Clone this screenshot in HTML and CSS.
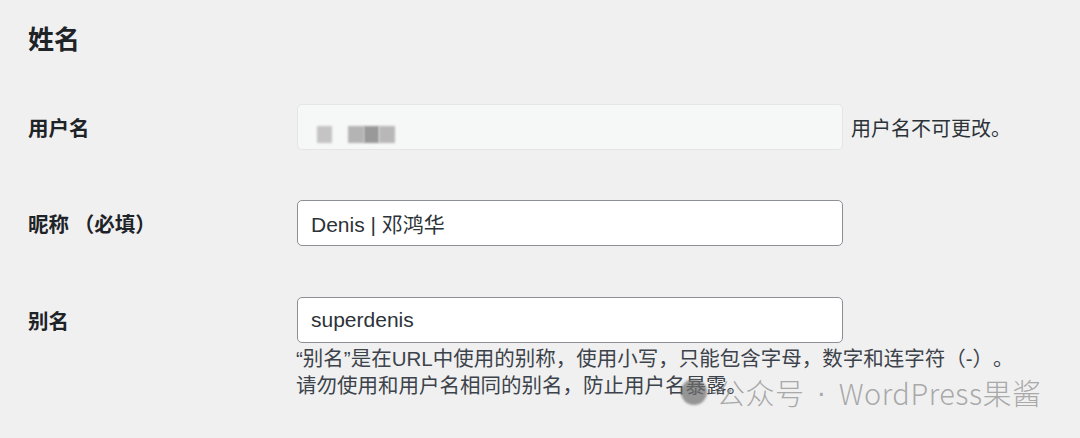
FILE: index.html
```html
<!DOCTYPE html>
<html lang="zh-CN">
<head>
<meta charset="utf-8">
<link rel="stylesheet" href="styles.css">
</head>
<body>
<div class="page">
  <h2 class="title">姓名</h2>
  <div class="row">
    <div class="label">用户名</div>
    <div class="field">
      <div class="input disabled">
        <span class="blur b1"></span>
        <span class="blur b2"></span>
        <span class="blur b3"></span>
        <span class="blur b4"></span>
      </div>
      <span class="note">用户名不可更改。</span>
    </div>
  </div>
  <div class="row">
    <div class="label">昵称 （必填）</div>
    <div class="field">
      <div class="input">Denis | 邓鸿华</div>
    </div>
  </div>
  <div class="row last">
    <div class="label">别名</div>
    <div class="field">
      <div class="input">superdenis</div>
    </div>
  </div>
  <div class="desc">
    <p>“别名”是在URL中使用的别称，使用小写，只能包含字母，数字和连字符（-）。</p>
    <p>请勿使用和用户名相同的别名，防止用户名暴露。</p>
  </div>
</div>
<div class="watermark"><span class="wm-icon"></span>公众号<span class="wm-dot">·</span>WordPress果酱</div>
</body>
</html>
```

FILE: styles.css
```css
html, body {
  margin: 0;
  padding: 0;
  background: #f0f0f1;
  height: 438px;
  overflow: hidden;
}
body {
  font-family: "Liberation Sans", "Noto Sans CJK SC", sans-serif;
  color: #1d2327;
  position: relative;
  text-spacing-trim: space-all;
}
.page {
  padding: 20px 28px 0 28px;
}
.title {
  margin: 0;
  font-family: "Noto Sans CJK SC", sans-serif;
  font-size: 26px;
  line-height: 36px;
  font-weight: 700;
  color: #1d2327;
}
.row {
  display: flex;
  align-items: center;
  margin-top: 48px;
  height: 46px;
}
.row + .row {
  margin-top: 50px;
}
.row.last {
  margin-top: 51px;
}
.label {
  width: 269px;
  font-family: "Noto Sans CJK SC", sans-serif;
  font-size: 20.5px;
  font-weight: 700;
  color: #1d2327;
}
.field {
  display: flex;
  align-items: center;
  gap: 8px;
}
.input {
  box-sizing: border-box;
  width: 546px;
  height: 46px;
  border: 1px solid #8c8f94;
  border-radius: 5px;
  background: #fff;
  padding: 0 13px;
  display: flex;
  align-items: center;
  font-size: 21px;
  color: #2c3338;
}
.input.disabled {
  background: #f6f7f7;
  border-color: #e4e5e6;
  position: relative;
}
.blur {
  position: absolute;
  top: 21px;
  height: 17px;
  background: #c4c4c4;
  filter: blur(1px);
}
.b1 { left: 19px; width: 15px; }
.b2 { left: 50px; width: 16px; background: #b4b4b4; }
.b3 { left: 66px; width: 15px; background: #999; }
.b4 { left: 81px; width: 16px; background: #b8b8b8; }
.note {
  font-family: "Noto Sans CJK SC", sans-serif;
  font-size: 20px;
  color: #2c3338;
}
.desc {
  margin-left: 268px;
  margin-top: 2px;
  font-size: 20.5px;
  line-height: 27px;
  color: #3c434a;
}
.desc p {
  margin: 0;
}
.watermark {
  position: absolute;
  left: 681px;
  top: 372px;
  display: flex;
  align-items: center;
  font-family: "Noto Sans CJK SC", sans-serif;
  font-weight: 300;
  font-size: 29px;
  line-height: 40px;
  color: rgba(150, 150, 150, 0.8);
  letter-spacing: 0.5px;
}
.wm-dot {
  font-family: "Liberation Sans", sans-serif;
  margin: 0 12px;
}
.wm-icon {
  width: 26px;
  height: 26px;
  border-radius: 50%;
  background: rgba(110, 110, 110, 0.7);
  margin-right: 9px;
  filter: blur(1px);
}
```
